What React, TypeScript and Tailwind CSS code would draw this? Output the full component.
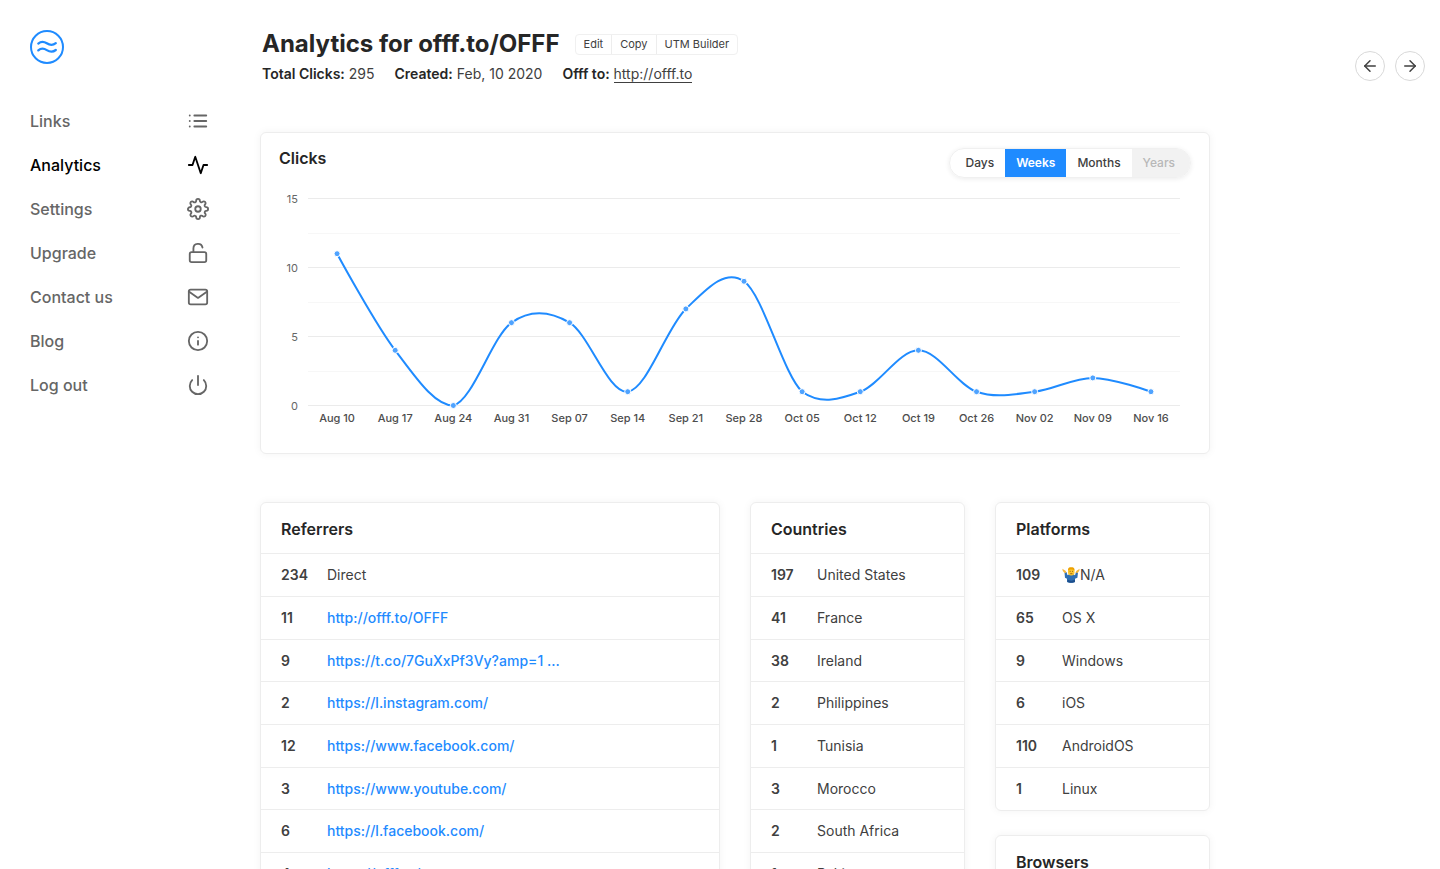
import type { ReactNode } from "react";
import {
  FiActivity,
  FiArrowLeft,
  FiArrowRight,
  FiInfo,
  FiList,
  FiMail,
  FiPower,
  FiSettings,
  FiUnlock,
} from "react-icons/fi";

const navItems = [
  { label: "Links", icon: FiList },
  { label: "Analytics", icon: FiActivity, active: true },
  { label: "Settings", icon: FiSettings },
  { label: "Upgrade", icon: FiUnlock },
  { label: "Contact us", icon: FiMail },
  { label: "Blog", icon: FiInfo },
  { label: "Log out", icon: FiPower },
];

const clicks = [
  { week: "Aug 10", value: 11 },
  { week: "Aug 17", value: 4 },
  { week: "Aug 24", value: 0 },
  { week: "Aug 31", value: 6 },
  { week: "Sep 07", value: 6 },
  { week: "Sep 14", value: 1 },
  { week: "Sep 21", value: 7 },
  { week: "Sep 28", value: 9 },
  { week: "Oct 05", value: 1 },
  { week: "Oct 12", value: 1 },
  { week: "Oct 19", value: 4 },
  { week: "Oct 26", value: 1 },
  { week: "Nov 02", value: 1 },
  { week: "Nov 09", value: 2 },
  { week: "Nov 16", value: 1 },
];

type Row = { count: number; label: string; href?: string; icon?: ReactNode };

const referrers: Row[] = [
  { count: 234, label: "Direct" },
  { count: 11, label: "http://offf.to/OFFF", href: "#" },
  { count: 9, label: "https://t.co/7GuXxPf3Vy?amp=1 ...", href: "#" },
  { count: 2, label: "https://l.instagram.com/", href: "#" },
  { count: 12, label: "https://www.facebook.com/", href: "#" },
  { count: 3, label: "https://www.youtube.com/", href: "#" },
  { count: 6, label: "https://l.facebook.com/", href: "#" },
  { count: 4, label: "https://offf.to/", href: "#" },
];

const countries: Row[] = [
  { count: 197, label: "United States" },
  { count: 41, label: "France" },
  { count: 38, label: "Ireland" },
  { count: 2, label: "Philippines" },
  { count: 1, label: "Tunisia" },
  { count: 3, label: "Morocco" },
  { count: 2, label: "South Africa" },
  { count: 1, label: "Pakistan" },
];

const platforms: Row[] = [
  { count: 109, label: "N/A", icon: <Shrug /> },
  { count: 65, label: "OS X" },
  { count: 9, label: "Windows" },
  { count: 6, label: "iOS" },
  { count: 110, label: "AndroidOS" },
  { count: 1, label: "Linux" },
];

function Logo() {
  return (
    <svg width="34" height="34" viewBox="0 0 34 34" fill="none" stroke="#1f8bff" strokeWidth="2">
      <circle cx="17" cy="17" r="16" />
      <path
        d="M8.300 13.600c2.700-2.400 5.600-2.200 8.500-.3 3.200 2.100 6 2.300 9-.1M8.300 20.400c2.700-2.400 5.600-2.200 8.500-.3 3.200 2.100 6 2.300 9-.1"
        strokeWidth="2.300"
        strokeLinecap="round"
      />
    </svg>
  );
}

function Shrug() {
  return (
    <svg width="18" height="16" viewBox="0 0 18 16" className="shrink-0" aria-hidden="true">
      <path d="M2.500 5.500 4.500 5l1 3.200 2-1.200h3.500l2 1.200L14 5l2 .5-.6 5.300-2.400 1V15c-1.500 1-6.500 1-8 0v-3.200l-2-1z" fill="#2f6fb4" />
      <path d="M5.500 12.500c2 1.500 5.500 1.500 7.500 0V15c-1.500 1-6 1-7.500 0z" fill="#1d4f8c" />
      <path d="M.3 1.800 3.500 3.800 4.500 5.500 2.500 6 .8 4zM17.700 1.800 14.500 3.800l-1 1.700 2 .5L17.200 4z" fill="#f5b63c" />
      <rect x="6" y="1" width="6.500" height="7.500" rx="3" fill="#fbc52d" />
      <path d="M6 3.500C5.800.8 7.300.3 9.200.3s3.500.5 3.300 3.200C11 2 7.500 2 6 3.500z" fill="#eda100" />
      <path d="M7.700 4.400h1M10 4.400h1M8.200 6.700h2.200" stroke="#7a4b12" strokeWidth=".7" />
    </svg>
  );
}

function Sidebar() {
  return (
    <aside className="w-[260px] shrink-0 py-[30px] pl-[30px] pr-[51px]">
      <a href="#" aria-label="Home" className="block w-[34px]">
        <Logo />
      </a>
      <nav className="mt-[35px]">
        {navItems.map(({ label, icon: Icon, active }) => (
          <a
            key={label}
            href="#"
            className={
              active
                ? "flex h-11 items-center justify-between text-base font-medium text-black"
                : "flex h-11 items-center justify-between text-base font-medium text-[#666]"
            }
          >
            {label}
            <Icon size={22} />
          </a>
        ))}
      </nav>
    </aside>
  );
}

function Header() {
  return (
    <header className="flex items-start justify-between">
      <div className="pl-0.5">
        <div className="flex items-center gap-[15px]">
          <h1 className="text-2xl leading-8 font-bold text-[#262626]">Analytics for offf.to/OFFF</h1>
          <div className="flex h-[21px] divide-x divide-[#ededed] rounded-sm border border-[#f0f0f0] text-[11px] text-[#404040]">
            <button className="px-2">Edit</button>
            <button className="px-2">Copy</button>
            <button className="px-2">UTM Builder</button>
          </div>
        </div>
        <div className="mt-1 flex gap-5 text-sm text-[#404040]">
          <p>
            <strong className="font-semibold text-[#262626]">Total Clicks:</strong> 295
          </p>
          <p>
            <strong className="font-semibold text-[#262626]">Created:</strong> Feb, 10 2020
          </p>
          <p>
            <strong className="font-semibold text-[#262626]">Offf to:</strong>{" "}
            <a href="#" className="border-b border-[#404040]">
              http://offf.to
            </a>
          </p>
        </div>
      </div>
      <div className="mt-[23px] flex gap-2.5 text-[#404040]">
        <button aria-label="Previous" className="flex size-[30px] items-center justify-center rounded-full border border-[#d9d9d9]">
          <FiArrowLeft size={18} />
        </button>
        <button aria-label="Next" className="flex size-[30px] items-center justify-center rounded-full border border-[#d9d9d9]">
          <FiArrowRight size={18} />
        </button>
      </div>
    </header>
  );
}

const CHART = { left: 29, right: 901, top: 8.5, bottom: 215.5, max: 15 };

// Catmull-Rom line through the points, with control points clamped to the plot area
function smoothPath(points: { x: number; y: number }[]) {
  const clamp = (y: number) => Math.min(CHART.bottom, Math.max(CHART.top, y));
  const controls = points.map((p, i) => {
    const prev = points[i - 1];
    const next = points[i + 1];
    if (!prev || !next) {
      return { inX: p.x, inY: p.y, outX: p.x, outY: p.y };
    }
    const dx = (next.x - prev.x) / 6;
    const dy = (next.y - prev.y) / 6;
    return { inX: p.x - dx, inY: clamp(p.y - dy), outX: p.x + dx, outY: clamp(p.y + dy) };
  });
  return points
    .map((p, i) =>
      i === 0
        ? `M${p.x},${p.y}`
        : `C${controls[i - 1].outX},${controls[i - 1].outY} ${controls[i].inX},${controls[i].inY} ${p.x},${p.y}`
    )
    .join(" ");
}

function ClicksChart() {
  const step = (CHART.right - CHART.left) / clicks.length;
  const toY = (v: number) => CHART.bottom - (v / CHART.max) * (CHART.bottom - CHART.top);
  const points = clicks.map((c, i) => ({ x: CHART.left + step * (i + 0.5), y: toY(c.value) }));

  return (
    <svg viewBox="0 0 912 240" className="w-full" role="img" aria-label="Clicks per week">
      {[0, 2.5, 5, 7.5, 10, 12.5, 15].map((v) => (
        <line
          key={v}
          x1={CHART.left}
          x2={CHART.right}
          y1={Math.floor(toY(v)) + 0.5}
          y2={Math.floor(toY(v)) + 0.5}
          stroke={v % 5 === 0 ? "#ebebeb" : "#f7f7f7"}
        />
      ))}
      {[0, 5, 10, 15].map((v) => (
        <text key={v} x="19" y={toY(v) + 4} textAnchor="end" className="fill-[#666] text-[11px]">
          {v}
        </text>
      ))}
      <path d={smoothPath(points)} fill="none" stroke="#1f8bff" strokeWidth="2" />
      {points.map((p, i) => (
        <g key={clicks[i].week}>
          <circle cx={p.x} cy={p.y} r="3" fill="#4fa3ff" stroke="#fff" />
          <text x={p.x} y="232" textAnchor="middle" className="fill-[#4d4d4d] text-[11px] font-medium">
            {clicks[i].week}
          </text>
        </g>
      ))}
    </svg>
  );
}

function ClicksCard() {
  return (
    <section className="mt-12 rounded-md border border-[#ededed] px-[18px] pt-[15px] pb-[23px] shadow-[0_0_8px_rgba(0,0,0,0.05)]">
      <div className="flex items-start justify-between">
        <h2 className="text-base leading-5 font-semibold text-[#262626]">Clicks</h2>
        <div className="flex h-[30px] overflow-hidden rounded-full border border-[#f0f0f0] text-xs font-medium text-[#404040] shadow-[0_1px_5px_rgba(0,0,0,0.08)]">
          <button className="pr-[11px] pl-[15px]">Days</button>
          <button className="bg-[#1f8bff] px-[11px] font-semibold text-white">Weeks</button>
          <button className="px-[11px]">Months</button>
          <button disabled className="bg-[#f2f2f2] pr-[15px] pl-[11px] text-[#b8b8b8]">
            Years
          </button>
        </div>
      </div>
      <div className="mt-3">
        <ClicksChart />
      </div>
    </section>
  );
}

function StatCard({ title, rows }: { title: string; rows: Row[] }) {
  return (
    <section className="rounded-md border border-[#ededed] shadow-[0_0_8px_rgba(0,0,0,0.05)]">
      <h2 className="flex h-[50px] items-center px-5 pt-0.5 text-base font-semibold text-[#262626]">{title}</h2>
      <table className="w-full text-left text-sm text-[#404040]">
        <tbody>
          {rows.map((row) => (
            <tr key={row.label} className="h-[43px] border-t border-[#ededed] nth-[3n]:h-[42px]">
              <th scope="row" className="w-[66px] pl-5 font-semibold">
                {row.count}
              </th>
              <td>
                {row.href ? (
                  <a href={row.href} className="font-medium text-[#1f8bff]">
                    {row.label}
                  </a>
                ) : (
                  <span className="flex items-center">
                    {row.icon}
                    {row.label}
                  </span>
                )}
              </td>
            </tr>
          ))}
        </tbody>
      </table>
    </section>
  );
}

export default function App() {
  return (
    <div className="flex min-h-screen bg-white font-['Inter',sans-serif]">
      <Sidebar />
      <main className="min-w-0 flex-1 pt-7 pr-[15px]">
        <Header />
        <div className="max-w-[950px]">
          <ClicksCard />
          <div className="mt-12 grid grid-cols-[460fr_215fr_215fr] items-start gap-[30px]">
            <StatCard title="Referrers" rows={referrers} />
            <StatCard title="Countries" rows={countries} />
            <div className="flex flex-col gap-6">
              <StatCard title="Platforms" rows={platforms} />
              <StatCard title="Browsers" rows={[]} />
            </div>
          </div>
        </div>
      </main>
    </div>
  );
}
